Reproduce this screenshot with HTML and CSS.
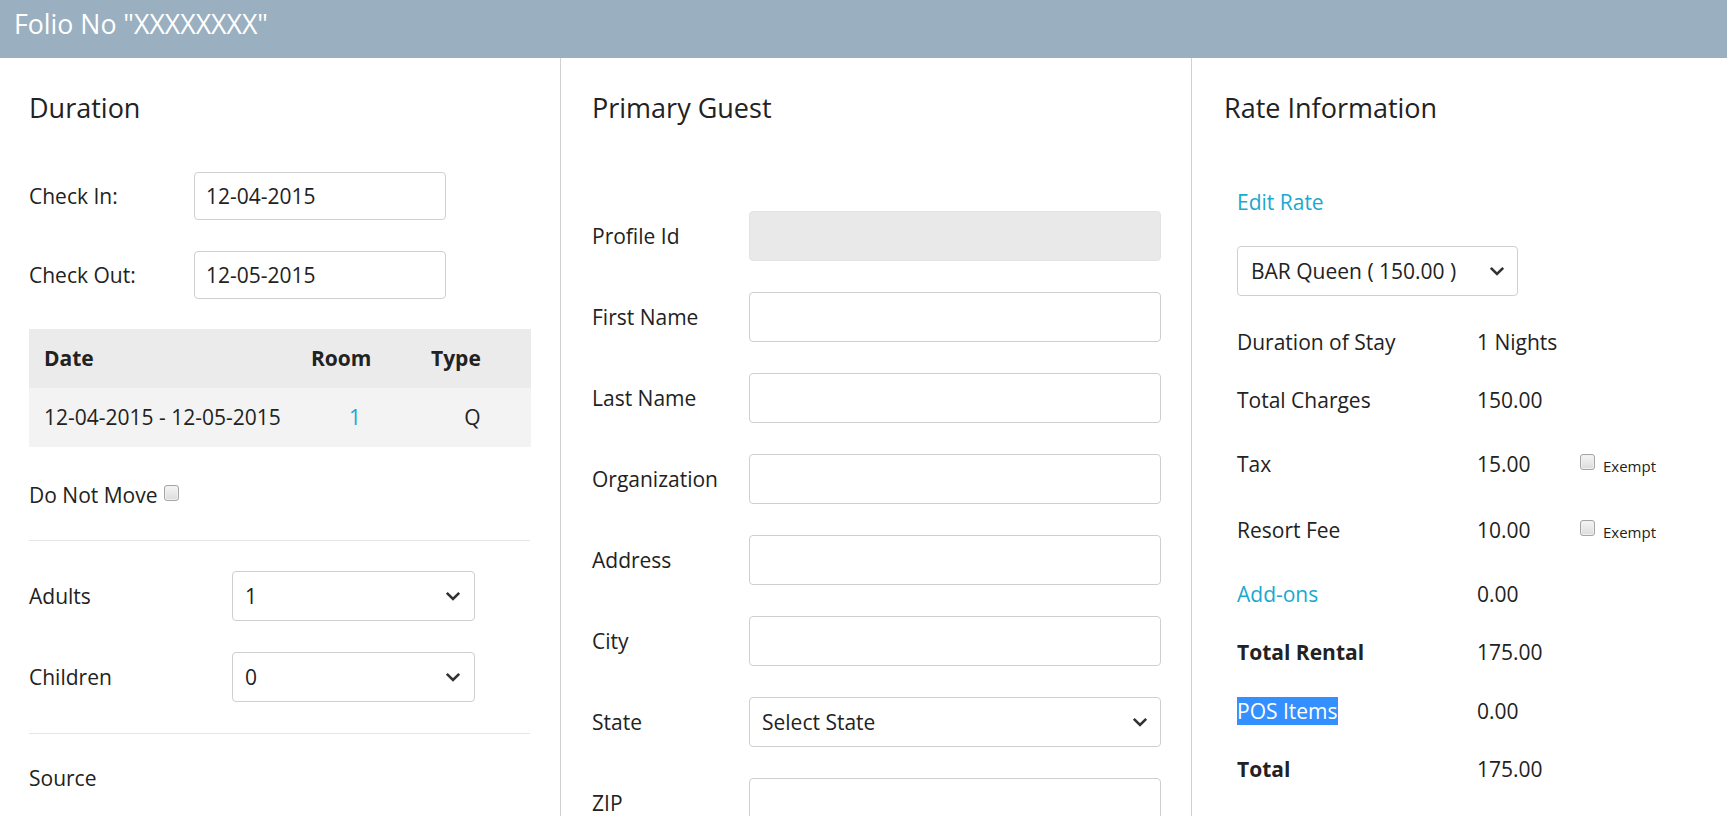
FILE: index.html
```html
<!DOCTYPE html>
<html lang="en">
<head>
<meta charset="utf-8">
<title>Folio</title>
<link rel="stylesheet" href="styles.css">
</head>
<body>
<header class="topbar">Folio No "XXXXXXXX"</header>
<main class="panels">
  <section class="col col-duration">
    <h2 class="col-title">Duration</h2>
    <div class="frow frow-first">
      <label class="flabel w164">Check In:</label>
      <input class="finput date" type="text" value="12-04-2015">
    </div>
    <div class="frow frow-date">
      <label class="flabel w164">Check Out:</label>
      <input class="finput date" type="text" value="12-05-2015">
    </div>
    <table class="rooms">
      <thead>
        <tr><th class="c-date">Date</th><th class="c-room">Room</th><th class="c-type">Type</th></tr>
      </thead>
      <tbody>
        <tr><td>12-04-2015 - 12-05-2015</td><td class="center link">1</td><td class="center">Q</td></tr>
      </tbody>
    </table>
    <div class="dnm">Do Not Move <span class="cbox"></span></div>
    <hr class="sep">
    <div class="frow frow-sel1">
      <label class="flabel w202">Adults</label>
      <div class="fselect sel-guests"><span>1</span><svg class="chev" viewBox="0 0 16 10" width="16" height="10"><polyline points="1.8,1.8 8,8 14.2,1.8" fill="none" stroke="#333" stroke-width="2.6"/></svg></div>
    </div>
    <div class="frow frow-sel">
      <label class="flabel w202">Children</label>
      <div class="fselect sel-guests"><span>0</span><svg class="chev" viewBox="0 0 16 10" width="16" height="10"><polyline points="1.8,1.8 8,8 14.2,1.8" fill="none" stroke="#333" stroke-width="2.6"/></svg></div>
    </div>
    <hr class="sep sep2">
    <div class="source">Source</div>
  </section>

  <section class="col col-guest">
    <h2 class="col-title">Primary Guest</h2>
    <div class="grow grow-first">
      <label class="flabel w157">Profile Id</label>
      <input class="finput wide readonly" type="text" readonly>
    </div>
    <div class="grow">
      <label class="flabel w157">First Name</label>
      <input class="finput wide" type="text">
    </div>
    <div class="grow">
      <label class="flabel w157">Last Name</label>
      <input class="finput wide" type="text">
    </div>
    <div class="grow">
      <label class="flabel w157">Organization</label>
      <input class="finput wide" type="text">
    </div>
    <div class="grow">
      <label class="flabel w157">Address</label>
      <input class="finput wide" type="text">
    </div>
    <div class="grow">
      <label class="flabel w157">City</label>
      <input class="finput wide" type="text">
    </div>
    <div class="grow">
      <label class="flabel w157">State</label>
      <div class="fselect wide"><span>Select State</span><svg class="chev" viewBox="0 0 16 10" width="16" height="10"><polyline points="1.8,1.8 8,8 14.2,1.8" fill="none" stroke="#333" stroke-width="2.6"/></svg></div>
    </div>
    <div class="grow">
      <label class="flabel w157">ZIP</label>
      <input class="finput wide" type="text">
    </div>
  </section>

  <section class="col col-rate">
    <h2 class="col-title">Rate Information</h2>
    <div class="rate-body">
      <a class="link edit-rate">Edit Rate</a>
      <div class="fselect sel-rate"><span>BAR Queen ( 150.00 )</span><svg class="chev" viewBox="0 0 16 10" width="16" height="10"><polyline points="1.8,1.8 8,8 14.2,1.8" fill="none" stroke="#333" stroke-width="2.6"/></svg></div>
      <div class="rrow r1"><span class="rl">Duration of Stay</span><span class="rv">1 Nights</span></div>
      <div class="rrow r2"><span class="rl">Total Charges</span><span class="rv">150.00</span></div>
      <div class="rrow r3"><span class="rl">Tax</span><span class="rv">15.00</span><span class="ex"><span class="cbox"></span><span class="ext">Exempt</span></span></div>
      <div class="rrow r4"><span class="rl">Resort Fee</span><span class="rv">10.00</span><span class="ex"><span class="cbox"></span><span class="ext">Exempt</span></span></div>
      <div class="rrow r5"><span class="rl"><a class="link">Add-ons</a></span><span class="rv">0.00</span></div>
      <div class="rrow r6"><span class="rl bold">Total Rental</span><span class="rv">175.00</span></div>
      <div class="rrow r7"><span class="rl"><span class="selected">POS Items</span></span><span class="rv">0.00</span></div>
      <div class="rrow r8"><span class="rl bold">Total</span><span class="rv">175.00</span></div>
    </div>
  </section>
</main>
</body>
</html>
```
FILE: styles.css
```css
* { box-sizing: border-box; }
html, body { margin: 0; padding: 0; }
body {
  font-family: "Open Sans", "Noto Sans", sans-serif;
  font-size: 21px;
  line-height: 29px;
  color: #222;
  background: #fff;
  width: 1727px;
  height: 816px;
  overflow: hidden;
}
.topbar {
  height: 58px;
  background: #9aafbf;
  color: #fff;
  font-size: 26.7px;
  line-height: 36px;
  padding: 6px 0 0 14px;
}
.panels {
  display: grid;
  grid-template-columns: 561px 631px 1fr;
  height: 758px;
}
.col {
  border-right: 1px solid #d0d0d0;
  padding-top: 31px;
}
.col-rate { border-right: none; padding-left: 32px; }
.col-duration { padding-left: 29px; padding-right: 30px; }
.col-guest { padding-left: 31px; padding-right: 29px; }
.col-title {
  margin: 0;
  font-size: 27px;
  line-height: 38px;
  font-weight: 400;
  color: #222;
}
.frow, .grow {
  display: flex;
  align-items: center;
}
.flabel { flex: none; }
.w164 { width: 165px; }
.w202 { width: 203px; }
.w157 { width: 157px; }
.frow-first { margin-top: 45px; }
.frow-date { margin-top: 31px; }
.finput {
  font-family: "Open Sans", "Noto Sans", sans-serif;
  font-size: 21px;
  color: #222;
  border: 1px solid #cfcfcf;
  border-radius: 4px;
  background: #fff;
  padding: 0 11px;
  outline: none;
  margin: 0;
}
.finput.date { width: 252px; height: 48px; }
.finput.wide { width: 412px; height: 50px; }
.finput.readonly { background: #e9e9e9; border-color: #e3e3e3; }
.fselect {
  display: flex;
  align-items: center;
  justify-content: space-between;
  border: 1px solid #cfcfcf;
  border-radius: 4px;
  background: #fff;
  padding: 0 13px 0 12px;
  height: 50px;
}
.fselect.wide { width: 412px; padding-right: 12px; }
.sel-guests { width: 243px; }
.chev { flex: none; display: block; }
.rooms {
  margin-top: 30px;
  width: 502px;
  border-collapse: collapse;
  table-layout: fixed;
}
.rooms th, .rooms td { padding: 0 15px; height: 59px; text-align: left; }
.rooms th { background: #ebebeb; font-weight: 700; }
.rooms td { background: #f3f3f3; }
.rooms .c-date { width: 267px; }
.rooms .c-room { width: 118px; padding-left: 15px; }
.rooms .c-type { padding-left: 17px; }
.rooms td.center { text-align: center; padding: 0; }
.link { color: #1aa9cf; text-decoration: none; cursor: pointer; }
.dnm { margin-top: 34px; display: flex; align-items: center; }
.cbox {
  display: inline-block;
  width: 15px;
  height: 16px;
  border: 1px solid #a5a5a5;
  border-radius: 3px;
  background: linear-gradient(#f5f5f5, #dcdcdc);
  box-shadow: inset 0 0 0 1px #f0f0f0;
}
.dnm .cbox { margin-left: 6px; position: relative; top: -3px; }
.sep { border: 0; border-top: 1px solid #e6e6e6; margin: 30px 0 0; height: 0; }
.frow-sel1 { margin-top: 30px; }
.frow-sel { margin-top: 31px; }
.sep2 { margin-top: 31px; }
.source { margin-top: 30px; }
.grow-first { margin-top: 84px; }
.grow + .grow { margin-top: 31px; }
.rate-body { padding-left: 13px; }
.edit-rate { display: block; margin-top: 61px; }
.sel-rate { width: 281px; margin-top: 29px; padding-right: 12px; padding-left: 13px; }
.rrow { display: flex; align-items: center; height: 29px; }
.rl { width: 240px; flex: none; }
.rv { width: 103px; flex: none; }
.bold { font-weight: 700; }
.ex { display: flex; align-items: center; }
.ex .cbox { position: relative; top: -3px; }
.ext { font-size: 15px; margin-left: 8px; position: relative; top: 2px; }
.selected { background: #3390fe; color: #fff; }
.r1 { margin-top: 32px; }
.r2 { margin-top: 29px; }
.r3 { margin-top: 35px; }
.r4 { margin-top: 37px; }
.r5 { margin-top: 35px; }
.r6 { margin-top: 29px; }
.r7 { margin-top: 30px; }
.r8 { margin-top: 29px; }
```
